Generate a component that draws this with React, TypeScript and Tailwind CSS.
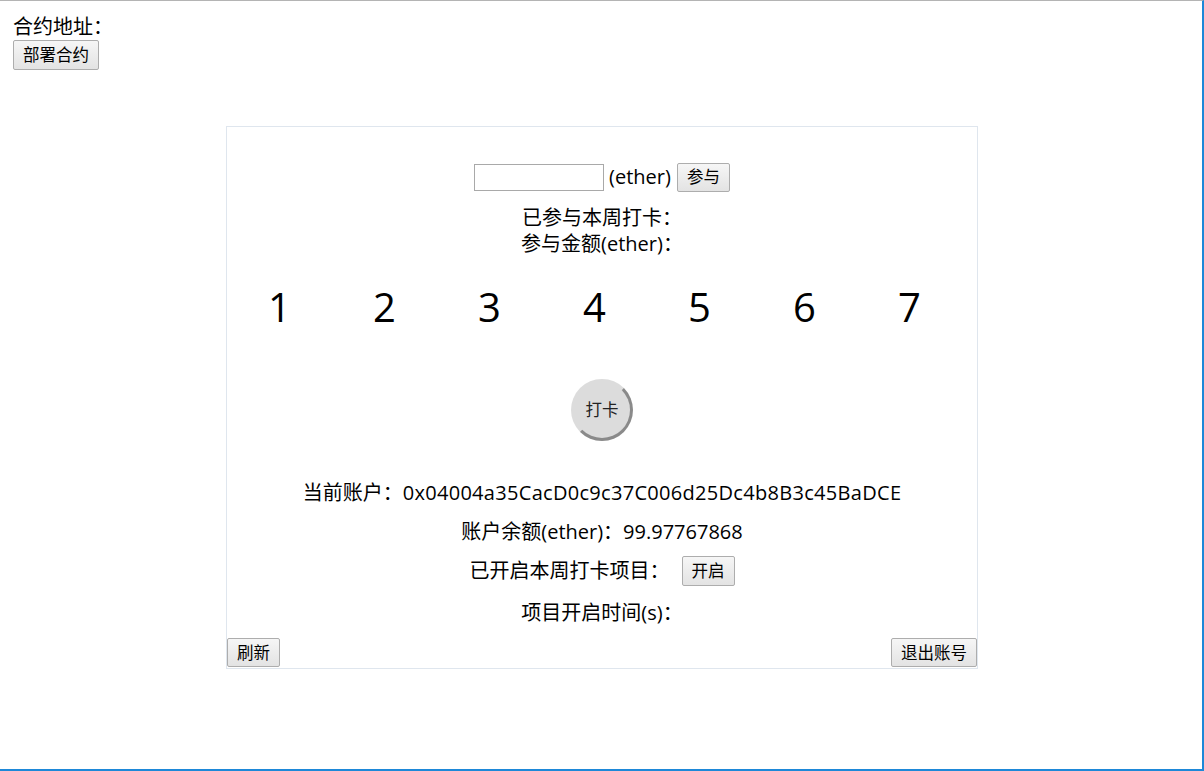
import React from "react"

const font = { fontFamily: '"Open Sans", "Noto Sans CJK SC", sans-serif' }

function Btn({ children, className = "" }: { children: React.ReactNode; className?: string }) {
  return (
    <button
      className={
        "h-[29px] px-[9px] border border-[#adadad] rounded-[2px] bg-gradient-to-b from-[#f6f6f6] to-[#e3e3e3] text-[16.5px] leading-[22px] text-black " +
        className
      }
    >
      {children}
    </button>
  )
}

export default function App() {
  const days = [1, 2, 3, 4, 5, 6, 7]
  return (
    <div
      style={font}
      className="h-[771px] w-full box-border border-t border-t-[#b4b4b4] border-r-2 border-r-[#1e88d8] border-b-2 border-b-[#1e88d8] bg-white text-black text-[20px]"
    >
      {/* header */}
      <div className="pl-[13px] pt-[14px]">
        <div className="leading-[24px]">合约地址：</div>
        <Btn className="h-[30px]">部署合约</Btn>
      </div>

      {/* card */}
      <div className="ml-[226px] mt-[56px] w-[752px] border border-[#dfe6ee] flex flex-col items-center">
        <div className="mt-[35px] flex items-center h-[30px]">
          <input className="w-[130px] h-[27px] border border-[#a9a9a9] outline-none" />
          <span className="ml-[5px] mr-[6px] leading-[26px]">(ether)</span>
          <Btn>参与</Btn>
        </div>

        <div className="mt-[13px] leading-[26px] text-center">
          <div>已参与本周打卡：</div>
          <div>参与金额(ether)：</div>
        </div>

        <div className="mt-[25px] flex justify-center pr-[15px] w-full">
          {days.map((d) => (
            <div key={d} className="w-[106.5px] text-center text-[40px] leading-[50px]">
              {d}
            </div>
          ))}
        </div>

        <button className="mt-[47px] w-[62px] h-[62px] rounded-full bg-[#dcdcdc] border-[3px] border-transparent border-r-[#8a8a8a] border-b-[#8a8a8a] text-[16.5px] text-[#222] flex items-center justify-center">
          打卡
        </button>

        <div className="mt-[39px] leading-[26px]">
          当前账户：<span className="tracking-[0.3px]">0x04004a35CacD0c9c37C006d25Dc4b8B3c45BaDCE</span>
        </div>
        <div className="mt-[13px] leading-[26px]">账户余额(ether)：99.97767868</div>
        <div className="mt-[11px] h-[30px] flex items-center">
          <span className="leading-[26px]">已开启本周打卡项目：</span>
          <Btn className="ml-[12px] h-[30px]">开启</Btn>
        </div>
        <div className="mt-[14px] leading-[26px]">项目开启时间(s)：</div>

        <div className="mt-[12px] mb-[1px] w-full flex justify-between">
          <Btn>刷新</Btn>
          <Btn>退出账号</Btn>
        </div>
      </div>
    </div>
  )
}
